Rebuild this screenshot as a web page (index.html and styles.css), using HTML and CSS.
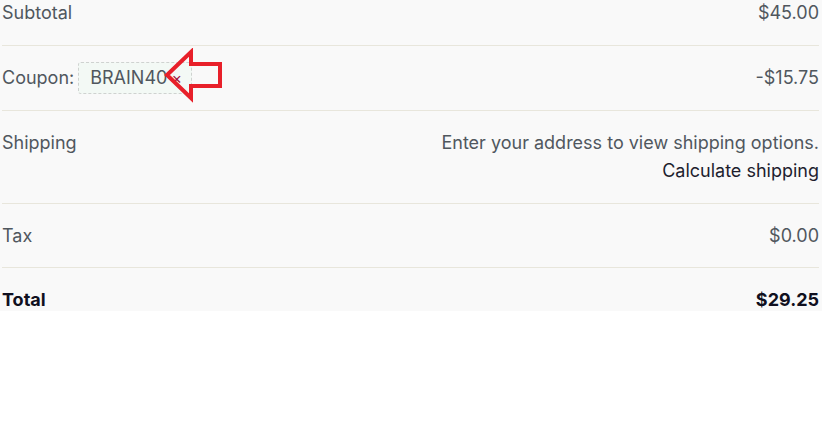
FILE: index.html
```html
<!DOCTYPE html>
<html lang="en">
<head>
    <meta charset="UTF-8">
    <title>Cart totals</title>
    <link rel="stylesheet" href="styles.css">
</head>
<body>

<div class="totals">
    <div class="totals-list">
        <div class="row">
            <span class="label">Subtotal</span>
            <span class="value">$45.00</span>
        </div>
        <div class="row">
            <span class="label coupon-label">Coupon:
                <span class="coupon">BRAIN40<span class="remove">×</span></span>
            </span>
            <span class="value">-$15.75</span>
        </div>
        <div class="row row-top">
            <span class="label">Shipping</span>
            <span class="value shipping">
                Enter your address to view shipping options.<br>
                <a class="calc" href="#">Calculate shipping</a>
            </span>
        </div>
        <div class="row">
            <span class="label">Tax</span>
            <span class="value">$0.00</span>
        </div>
        <div class="row total">
            <span class="label">Total</span>
            <span class="value">$29.25</span>
        </div>
    </div>

    <!-- annotation arrow -->
    <svg class="arrow" width="62" height="56" viewBox="0 0 62 56">
        <path d="M4 27 L28 4 L28 16 L57 16 L57 38 L28 38 L28 50 Z" fill="none" stroke="#e8202a" stroke-width="4" stroke-linejoin="miter"/>
    </svg>
</div>

</body>
</html>
```

FILE: styles.css
```css
body {
    margin: 0;
    background-color: #fff;
    font-family: Inter, "Noto Sans", sans-serif;
}
.totals {
    position: relative;
    background-color: #f9f9f9;
    height: 311px;
    overflow: hidden;
}
.totals-list {
    margin-top: -19px;
    padding: 0 3px 0 2px;
}
.row {
    display: flex;
    justify-content: space-between;
    align-items: center;
    padding: 18px 0;
    line-height: 28px;
    font-size: 18px;
    color: #50575e;
    border-top: 1px solid #e8e6dc;
}
.row:first-child {
    border-top: none;
}
.row-top {
    align-items: flex-start;
}
.row-top + .row {
    padding-bottom: 17px;
}
.value {
    text-align: right;
}
.coupon-label {
    display: flex;
    align-items: center;
    gap: 4px;
}
.coupon {
    display: inline-flex;
    align-items: center;
    height: 30px;
    margin: -2px 0;
    padding: 0 9px 0 11px;
    background-color: #f3f9f5;
    border: 1px dashed #cfd2d0;
    border-radius: 3px;
}
.remove {
    color: #a0103a;
    font-size: 16px;
    margin-left: 4px;
}
.calc {
    color: #1e1e2e;
    text-decoration: none;
}
.total {
    color: #101020;
    font-weight: 700;
}
.arrow {
    position: absolute;
    left: 163px;
    top: 48px;
}
```
